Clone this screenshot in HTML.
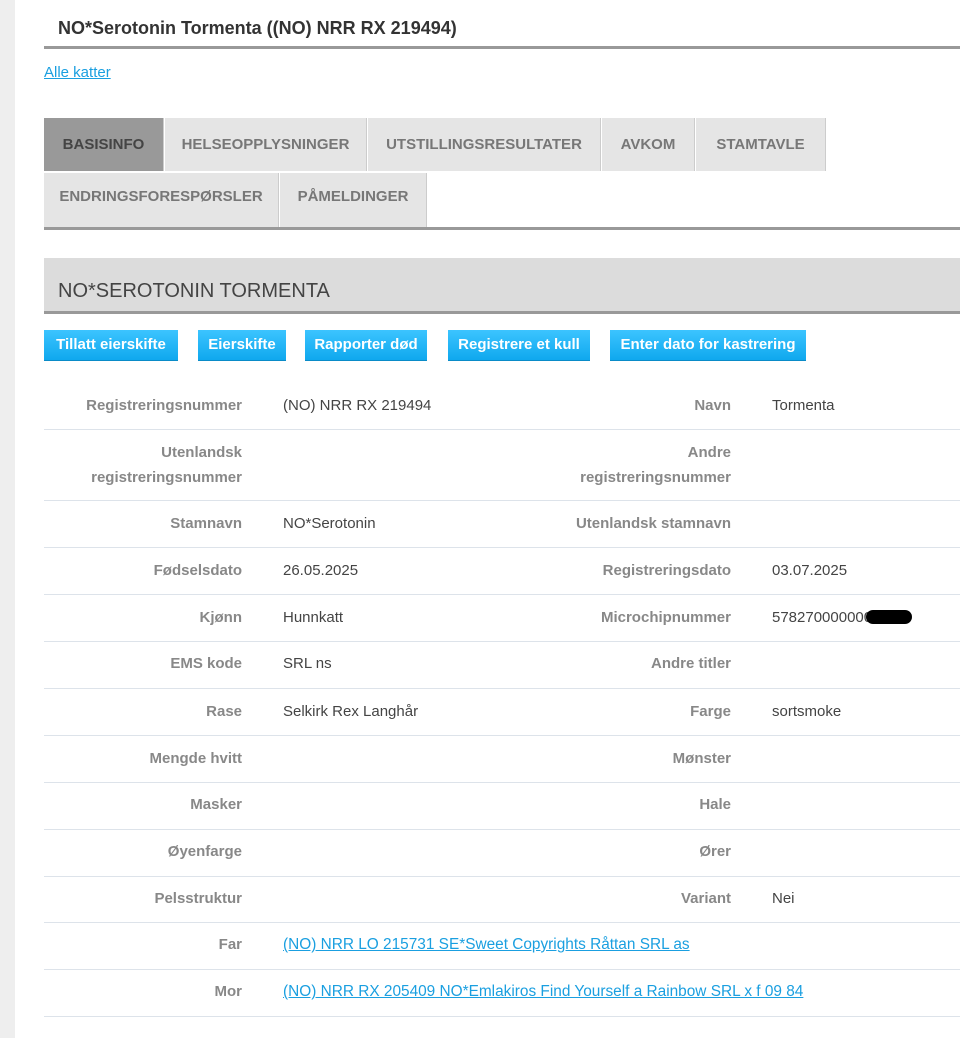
<!DOCTYPE html><html><head><style>
body{margin:0;width:960px;height:1038px;background:#fff;font-family:"Liberation Sans",sans-serif;position:relative;overflow:hidden}
.strip{position:absolute;left:0;top:0;width:15px;height:1038px;background:#eee}
.a{position:absolute}
h1{position:absolute;left:58px;top:18px;margin:0;font-size:18px;font-weight:bold;color:#333}
.tb{position:absolute;height:53px;background:#e5e5e5;color:#777;font-weight:bold;font-size:15px;line-height:53px;text-align:center;box-sizing:border-box;border-right:1px solid #ccc}
.btn{position:absolute;top:330px;height:30px;line-height:29px;background:linear-gradient(#3cc4ff,#0fa8ee);color:#fff;font-weight:bold;font-size:15px;text-align:center;border-bottom:1px solid #0a8bc7}
.row{position:absolute;left:44px;width:916px;border-bottom:1px solid #dde3ea;font-size:15px}
.l{position:absolute;right:718px;color:#888;font-weight:bold;text-align:right;line-height:25px}
.v{position:absolute;left:239px;color:#444}
.l2{position:absolute;right:229px;color:#888;font-weight:bold;text-align:right;line-height:25px}
.v2{position:absolute;left:728px;color:#444}
a{color:#1a9fe0}
.lk{font-size:15.4px}
</style></head><body>
<div class="strip"></div>
<h1>NO*Serotonin Tormenta ((NO) NRR RX 219494)</h1>
<div class="a" style="left:44px;top:46px;width:916px;height:3px;background:#999"></div>
<a class="a" style="left:44px;top:64px;font-size:15px" href="#">Alle katter</a>
<div class="tb" style="left:44px;top:118px;width:120px;background:#999;color:#444">BASISINFO</div>
<div class="tb" style="left:165px;top:118px;width:202px">HELSEOPPLYSNINGER</div>
<div class="tb" style="left:368px;top:118px;width:233px">UTSTILLINGSRESULTATER</div>
<div class="tb" style="left:602px;top:118px;width:93px">AVKOM</div>
<div class="tb" style="left:696px;top:118px;width:130px">STAMTAVLE</div>
<div class="tb" style="left:44px;top:173px;width:235px;height:54px;line-height:47px">ENDRINGSFORESPØRSLER</div>
<div class="tb" style="left:280px;top:173px;width:147px;height:54px;line-height:47px">PÅMELDINGER</div>
<div class="a" style="left:44px;top:227px;width:916px;height:3px;background:#999"></div>
<div class="a" style="left:44px;top:258px;width:916px;height:53px;background:#dcdcdc;border-bottom:3px solid #999"></div>
<div class="a" style="left:58px;top:280px;font-size:20px;color:#444">NO*SEROTONIN TORMENTA</div>
<div class="btn" style="left:44px;width:134px">Tillatt eierskifte</div>
<div class="btn" style="left:198px;width:88px">Eierskifte</div>
<div class="btn" style="left:305px;width:122px">Rapporter død</div>
<div class="btn" style="left:448px;width:142px">Registrere et kull</div>
<div class="btn" style="left:610px;width:196px">Enter dato for kastrering</div>

<div class="row" style="top:382px;height:47px"><div class="l" style="top:11px">Registreringsnummer</div><div class="v" style="top:15px">(NO) NRR RX 219494</div><div class="l2" style="top:11px">Navn</div><div class="v2" style="top:15px">Tormenta</div></div>
<div class="row" style="top:430px;height:70px"><div class="l" style="top:10px">Utenlandsk<br>registreringsnummer</div><div class="l2" style="top:10px">Andre<br>registreringsnummer</div></div>
<div class="row" style="top:501px;height:46px"><div class="l" style="top:10px">Stamnavn</div><div class="v" style="top:14px">NO*Serotonin</div><div class="l2" style="top:10px">Utenlandsk stamnavn</div></div>
<div class="row" style="top:548px;height:46px"><div class="l" style="top:10px">Fødselsdato</div><div class="v" style="top:14px">26.05.2025</div><div class="l2" style="top:10px">Registreringsdato</div><div class="v2" style="top:14px">03.07.2025</div></div>
<div class="row" style="top:595px;height:46px"><div class="l" style="top:10px">Kjønn</div><div class="v" style="top:14px">Hunnkatt</div><div class="l2" style="top:10px">Microchipnummer</div><div class="v2" style="top:14px">578270000000<span style="display:inline-block;width:46px;height:14px;background:#000;border-radius:7px;vertical-align:-2px;margin-left:-6px"></span></div></div>
<div class="row" style="top:642px;height:46px"><div class="l" style="top:9px">EMS kode</div><div class="v" style="top:13px">SRL ns</div><div class="l2" style="top:9px">Andre titler</div></div>
<div class="row" style="top:689px;height:46px"><div class="l" style="top:10px">Rase</div><div class="v" style="top:14px">Selkirk Rex Langhår</div><div class="l2" style="top:10px">Farge</div><div class="v2" style="top:14px">sortsmoke</div></div>
<div class="row" style="top:736px;height:46px"><div class="l" style="top:10px">Mengde hvitt</div><div class="l2" style="top:10px">Mønster</div></div>
<div class="row" style="top:783px;height:46px"><div class="l" style="top:9px">Masker</div><div class="l2" style="top:9px">Hale</div></div>
<div class="row" style="top:830px;height:46px"><div class="l" style="top:9px">Øyenfarge</div><div class="l2" style="top:9px">Ører</div></div>
<div class="row" style="top:877px;height:45px"><div class="l" style="top:9px">Pelsstruktur</div><div class="l2" style="top:9px">Variant</div><div class="v2" style="top:13px">Nei</div></div>
<div class="row" style="top:923px;height:46px"><div class="l" style="top:9px">Far</div><a class="v lk" style="top:13px;color:#1a9fe0" href="#">(NO) NRR LO 215731 SE*Sweet Copyrights Råttan SRL as</a></div>
<div class="row" style="top:970px;height:46px"><div class="l" style="top:9px">Mor</div><a class="v lk" style="top:13px;color:#1a9fe0" href="#">(NO) NRR RX 205409 NO*Emlakiros Find Yourself a Rainbow SRL x f 09 84</a></div>
</body></html>
